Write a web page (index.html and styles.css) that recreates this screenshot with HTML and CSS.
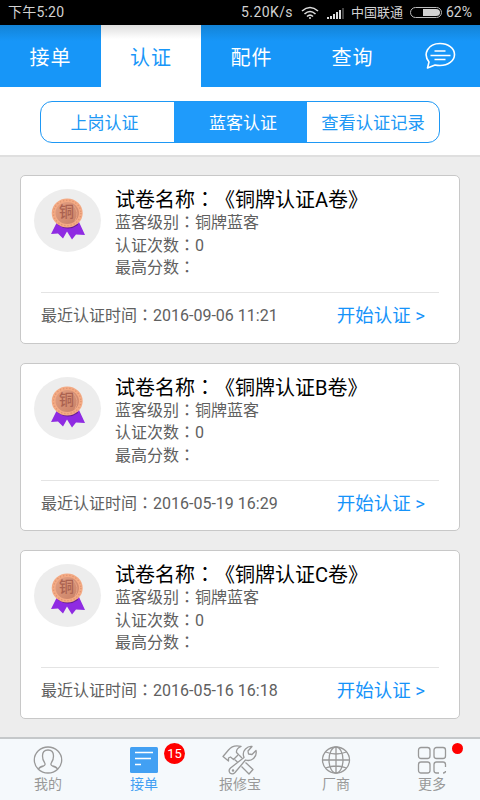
FILE: index.html
```html
<!DOCTYPE html>
<html lang="zh-CN">
<head>
<meta charset="utf-8">
<title>认证</title>
<link rel="stylesheet" href="styles.css">
</head>
<body>
<svg class="defs" width="0" height="0" aria-hidden="true">
  <defs>
    <linearGradient id="copper" x1="0" y1="0" x2="1" y2="1">
      <stop offset="0" stop-color="#e3a184"/><stop offset="1" stop-color="#c97f64"/>
    </linearGradient>
    <symbol id="medal" viewBox="0 0 36 44">
      <path d="M7 24 1 36l7-.5 5 5 4-7 5 8 4-5 9 .5-6-13z" fill="#8f2be2"/>
      <path d="M8 27q10 7 20 0l-1-4H9z" fill="#651f91"/>
      <ellipse cx="17.200" cy="15" rx="15.500" ry="14.500" fill="#f4aa84"/>
      <ellipse cx="17.200" cy="15" rx="13.700" ry="12.700" fill="none" stroke="#dc9470" stroke-width="1.300" stroke-dasharray="1.200 2"/>
      <ellipse cx="17.200" cy="15" rx="11.700" ry="11" fill="url(#copper)"/>
      <path d="M23 7q7 7 2 16" fill="none" stroke="#e5a488" stroke-width="1"/>
    </symbol>
  </defs>
</svg>
<div class="status">
  <span class="time">下午5:20</span>
  <span class="speed">5.20K/s</span>
  <svg class="wifi" width="18" height="14" viewBox="0 0 18 14" fill="none" stroke="#ddd" stroke-width="1.6"><path d="M1 5q8-7 16 0M3.500 8q5.500-5 11 0M6 10.500q3-2.700 6 0"/><circle cx="9" cy="12" r="1" fill="#ddd" stroke="none"/></svg>
  <svg class="signal" width="17" height="11" viewBox="0 0 17 11" fill="#ddd"><path d="M0 9h2v2H0zM3 8h2v3H3zM6 6h2v5H6zM9 4h2v7H9zM12 2h2v9h-2z"/><path d="M15 0h2v11h-2z" fill="#444"/></svg>
  <span class="carrier">中国联通</span>
  <svg class="battery" width="32" height="11" viewBox="0 0 32 11"><rect x=".5" y=".5" width="31" height="10" rx="5" fill="none" stroke="#bbb"/><path d="M13 2h13q4 0 4 3.500T26 9H13z" fill="#d2d2d2"/></svg>
  <span class="percent">62%</span>
</div>
<nav class="tabs">
  <span class="tab">接单</span>
  <span class="tab active">认证</span>
  <span class="tab">配件</span>
  <span class="tab">查询</span>
  <span class="tab chat"><svg width="32" height="28" viewBox="0 0 32 28" fill="none" stroke="#fff" stroke-width="1.600"><path d="M5 20C-1.500 12 4 1.500 16 1.500c8 0 14.500 4.500 14.500 11S24 23.500 16 23.500q-3 0-5-.500l-7.500 3z" stroke-linejoin="round"/><path d="M10.500 9h11M6.500 13.500h20M10.500 17.500h11"/></svg></span>
</nav>
<div class="filter">
  <div class="segments">
    <span class="first">上岗认证</span><span class="selected">蓝客认证</span><span class="last">查看认证记录</span>
  </div>
</div>
<main>
  <article class="card">
    <div class="info">
      <div class="avatar"><svg width="36" height="44"><use href="#medal"/></svg><b>铜</b></div>
      <div class="text"><h2>试卷名称<i lang="zh-TW">：</i>《铜牌认证A卷》</h2><p>蓝客级别<i lang="zh-TW">：</i>铜牌蓝客</p><p>认证次数<i lang="zh-TW">：</i>0</p><p>最高分数<i lang="zh-TW">：</i></p></div>
    </div>
    <div class="foot"><span>最近认证时间<i lang="zh-TW">：</i>2016-09-06 11:21</span><a>开始认证 &gt;</a></div>
  </article>
  <article class="card">
    <div class="info">
      <div class="avatar"><svg width="36" height="44"><use href="#medal"/></svg><b>铜</b></div>
      <div class="text"><h2>试卷名称<i lang="zh-TW">：</i>《铜牌认证B卷》</h2><p>蓝客级别<i lang="zh-TW">：</i>铜牌蓝客</p><p>认证次数<i lang="zh-TW">：</i>0</p><p>最高分数<i lang="zh-TW">：</i></p></div>
    </div>
    <div class="foot"><span>最近认证时间<i lang="zh-TW">：</i>2016-05-19 16:29</span><a>开始认证 &gt;</a></div>
  </article>
  <article class="card">
    <div class="info">
      <div class="avatar"><svg width="36" height="44"><use href="#medal"/></svg><b>铜</b></div>
      <div class="text"><h2>试卷名称<i lang="zh-TW">：</i>《铜牌认证C卷》</h2><p>蓝客级别<i lang="zh-TW">：</i>铜牌蓝客</p><p>认证次数<i lang="zh-TW">：</i>0</p><p>最高分数<i lang="zh-TW">：</i></p></div>
    </div>
    <div class="foot"><span>最近认证时间<i lang="zh-TW">：</i>2016-05-16 16:18</span><a>开始认证 &gt;</a></div>
  </article>
</main>
<nav class="bottom">
  <div class="item"><svg width="30" height="28" viewBox="0 0 30 28"><ellipse cx="15" cy="14" rx="13.700" ry="13"/><path d="M5.500 23q1-2 5-3 2.500-1 1-3.500-2-2.500-2-6.500 0-6 5.500-6t5.500 6q0 4-2 6.500-1.500 2.500 1 3.500 4 1 5 3"/></svg><span>我的</span></div>
  <div class="item on"><svg width="30" height="28" viewBox="0 0 30 28"><rect x="1" y="1" width="28" height="26" rx="1.500" fill="#42a0f3" stroke="none"/><path d="M6 6.500h18M6 12.500h16M6 18.500h6" stroke="#fff" stroke-width="1.400"/></svg><span>接单</span><em class="badge">15</em></div>
  <div class="item"><svg class="tools" width="36" height="30" viewBox="0 0 36 30" stroke-linejoin="round"><path d="M1 11.500 6.500 5Q11-.500 19 1.500q-5 2-4.500 6l2 2-5 5-3-2.500-2 1v3z"/><path d="M17 10l3 3M12.500 14.500l3 2.500"/><path d="M22 12.500q-2-5 1.500-8.500 3-3 6.500-2.500l-4 4.500.500 3 3.500.500 4-4q1 5-2.500 8t-8 1.500L13 27.500q-2.500 2.500-5 .500-2-2.500.500-5z"/><path d="m23.500 17.500 7.500 7-4 4.500-7.500-7.500"/><circle cx="11" cy="25.500" r=".6"/></svg><span>报修宝</span></div>
  <div class="item"><svg width="30" height="28" viewBox="0 0 30 28"><ellipse cx="15" cy="14" rx="13.500" ry="13"/><ellipse cx="15" cy="14" rx="7" ry="13"/><path d="M15 1v26M1.500 14h27M4.500 6q10.500 4 21 0M4.500 22q10.500-4 21 0"/></svg><span>厂商</span></div>
  <div class="item"><svg width="30" height="28" viewBox="0 0 30 28"><rect x="1.500" y="1.500" width="11.500" height="11" rx="2.500"/><rect x="17" y="1.500" width="11.500" height="11" rx="2.500"/><rect x="1.500" y="16" width="11.500" height="11" rx="2.500"/><path d="M22 27h-2.500q-2.500 0-2.500-2.500v-6q0-2.500 2.500-2.500H26q2.500 0 2.500 2.500V21M28.500 25q0 2-2.500 2"/></svg><span>更多</span><em class="dot"></em></div>
</nav>
</body>
</html>
```
FILE: styles.css
```css
* { box-sizing: border-box; }
body { margin: 0; width: 480px; height: 800px; overflow: hidden; display: flex; flex-direction: column; background: #ededed; font-family: Roboto, "Noto Sans CJK SC", sans-serif; text-spacing-trim: space-all; }
i { font-style: normal; font-family: "Noto Sans CJK TC", sans-serif; line-height: 1; }
.defs { position: absolute; }
.status { height: 25px; flex: none; display: flex; align-items: center; background: #000; color: #d2d2d2; font-size: 13px; line-height: 25px; padding: 0 8px; white-space: nowrap; }
.time { flex: 1; font-size: 14px; letter-spacing: .2px; }
.speed { font-size: 14px; letter-spacing: .4px; margin-right: 8px; }
.wifi { margin-right: 8px; }
.signal { margin: 1px 7px 0 0; }
.carrier { margin-right: 7px; }
.battery { margin-right: 4px; }
.percent { font-size: 14px; }
.tabs { height: 62px; flex: none; display: grid; grid-template-columns: 101px 100px 101px 101px 77px; background: linear-gradient(#1383d6, #1796f8 16px); color: #fff; font-size: 20px; letter-spacing: 1px; }
.tab { display: flex; align-items: center; justify-content: center; }
.active { background: linear-gradient(#dedede, #fff 14px); color: #1796f8; }
.chat { padding: 0 3px 0 0; }
.filter { height: 70px; flex: none; padding-top: 14px; background: #fff; border-bottom: 2px solid #dfdfdf; }
.segments { width: 400px; height: 42px; margin: 0 auto; display: grid; grid-template-columns: 133px 133px 1fr; border: 1px solid #1e98f5; border-radius: 12px; overflow: hidden; color: #2098f5; font-size: 17px; line-height: 42px; text-align: center; }
.first { padding-right: 6px; }
.selected { background: #1f9bfb; color: #fff; padding-left: 5px; }
.last { font-size: 17.300px; }
main { flex: 1; padding: 18px 20px 0; display: flex; flex-direction: column; gap: 19px; }
.card { height: 168.500px; flex: none; border: 1px solid #c8c8c8; border-radius: 5px; background: #fff; padding: 0 20px; }
.info { height: 116px; margin-left: -7px; display: flex; gap: 14px; }
.avatar { position: relative; width: 67px; height: 63px; margin-top: 13px; border-radius: 50%; background: #ededed; padding: 9px 0 0 16px; }
.avatar b { position: absolute; left: 25px; top: 13px; font-size: 15px; font-weight: 500; line-height: 20px; color: #ab6250; }
.text { padding-top: 13px; }
h2 { margin: 0; height: 23px; font-size: 20px; font-weight: 400; line-height: 23px; color: #000; }
p { margin: 0; height: 22.500px; font-size: 16px; line-height: 21px; color: #606060; }
.foot { height: 50px; padding-bottom: 3px; display: flex; justify-content: space-between; align-items: center; border-top: 1px solid #e4e4e4; font-size: 16px; line-height: 24px; color: #606060; }
.foot a { color: #1593fa; font-size: 18.500px; padding-right: 14px; }
.bottom { height: 63px; flex: none; border-top: 2px solid #c5c8ca; background: #f5f9fc; display: grid; grid-template-columns: repeat(5, 96px); }
.item { position: relative; display: flex; flex-direction: column; align-items: center; justify-content: flex-end; color: #999; font-size: 14px; line-height: 20px; padding-bottom: 6px; }
.item svg { fill: none; stroke: #999; stroke-width: 1.3; }
.item .tools { margin-bottom: -1px; }
.item.on { color: #42a0f3; }
.badge { position: absolute; left: 68px; top: 4px; width: 21px; height: 21px; border-radius: 50%; background: #f00; color: #fff; font-size: 13px; font-style: normal; line-height: 21px; text-align: center; }
.dot { position: absolute; left: 68px; top: 4px; width: 11px; height: 11px; border-radius: 50%; background: #f00; }
```
